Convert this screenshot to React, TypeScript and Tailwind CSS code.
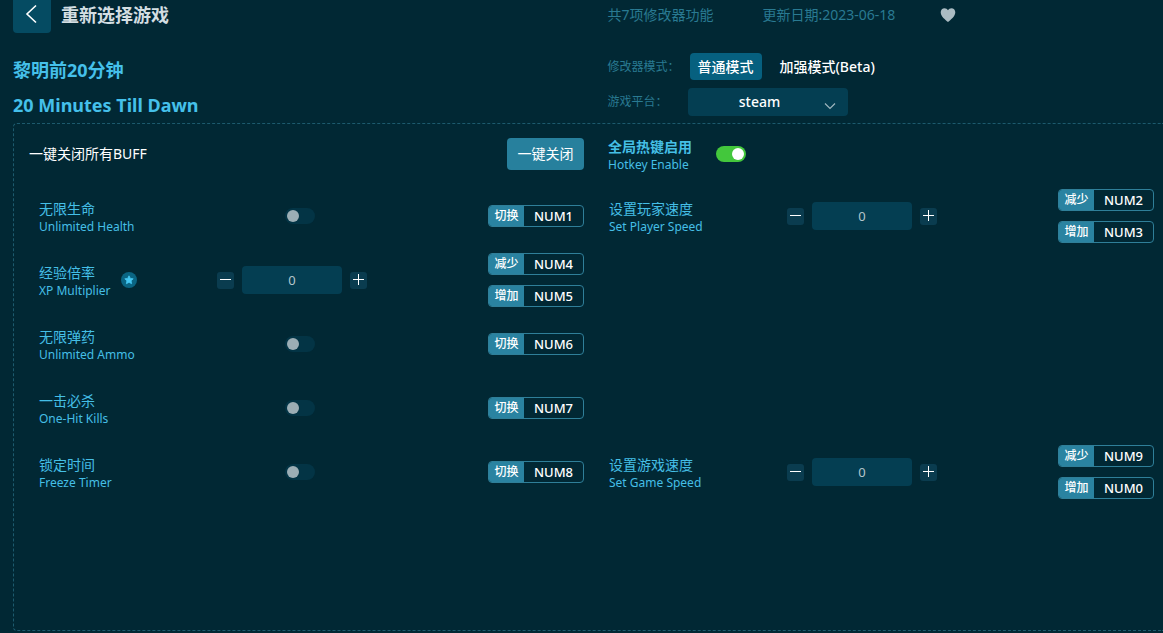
import { useState } from 'react';

type Hotkey = { action: string; keyName: string };

type Cheat = {
  id: string;
  name: string;
  nameEn: string;
  type: 'toggle' | 'number';
  starred?: boolean;
  cell: string;
  hotkeys: Hotkey[];
};

const cheats: Cheat[] = [
  {
    id: 'health',
    name: '无限生命',
    nameEn: 'Unlimited Health',
    type: 'toggle',
    cell: 'col-start-1 row-start-1',
    hotkeys: [{ action: '切换', keyName: 'NUM1' }],
  },
  {
    id: 'player-speed',
    name: '设置玩家速度',
    nameEn: 'Set Player Speed',
    type: 'number',
    cell: 'col-start-2 row-start-1',
    hotkeys: [
      { action: '减少', keyName: 'NUM2' },
      { action: '增加', keyName: 'NUM3' },
    ],
  },
  {
    id: 'xp',
    name: '经验倍率',
    nameEn: 'XP Multiplier',
    type: 'number',
    starred: true,
    cell: 'col-start-1 row-start-2',
    hotkeys: [
      { action: '减少', keyName: 'NUM4' },
      { action: '增加', keyName: 'NUM5' },
    ],
  },
  {
    id: 'ammo',
    name: '无限弹药',
    nameEn: 'Unlimited Ammo',
    type: 'toggle',
    cell: 'col-start-1 row-start-3',
    hotkeys: [{ action: '切换', keyName: 'NUM6' }],
  },
  {
    id: 'one-hit',
    name: '一击必杀',
    nameEn: 'One-Hit Kills',
    type: 'toggle',
    cell: 'col-start-1 row-start-4',
    hotkeys: [{ action: '切换', keyName: 'NUM7' }],
  },
  {
    id: 'freeze',
    name: '锁定时间',
    nameEn: 'Freeze Timer',
    type: 'toggle',
    cell: 'col-start-1 row-start-5',
    hotkeys: [{ action: '切换', keyName: 'NUM8' }],
  },
  {
    id: 'game-speed',
    name: '设置游戏速度',
    nameEn: 'Set Game Speed',
    type: 'number',
    cell: 'col-start-2 row-start-5',
    hotkeys: [
      { action: '减少', keyName: 'NUM9' },
      { action: '增加', keyName: 'NUM0' },
    ],
  },
];

function Toggle({ id, on = false }: { id: string; on?: boolean }) {
  return (
    <input
      id={id}
      type="checkbox"
      role="switch"
      defaultChecked={on}
      className="flex h-4 w-[30px] cursor-pointer appearance-none items-center rounded-full bg-[#033445] px-0.5 before:block before:size-3 before:rounded-full before:bg-[#9caeb5] checked:justify-end checked:bg-[#43c73c] checked:before:bg-white"
    />
  );
}

function Stepper({ id }: { id: string }) {
  const [value, setValue] = useState(0);
  const stepButton = 'flex size-[17px] items-center justify-center rounded-[3px] bg-[#0a3c4f] text-white';

  return (
    <div className="flex items-center gap-2">
      <button type="button" aria-label="减少" onClick={() => setValue(value - 1)} className={stepButton}>
        <svg viewBox="0 0 17 17" className="size-[17px]" stroke="currentColor">
          <path d="M3 7.5h11" />
        </svg>
      </button>
      <input
        id={id}
        type="text"
        value={value}
        onChange={(e) => setValue(Number(e.target.value) || 0)}
        className="h-7 w-[100px] rounded-[4px] bg-[#043e52] text-center text-[13px] text-[#b4c5cc] outline-none"
      />
      <button type="button" aria-label="增加" onClick={() => setValue(value + 1)} className={stepButton}>
        <svg viewBox="0 0 17 17" className="size-[17px]" stroke="currentColor">
          <path d="M3 7.5h11M8.5 2v11" />
        </svg>
      </button>
    </div>
  );
}

function HotkeyButton({ action, keyName }: Hotkey) {
  return (
    <button type="button" className="flex h-[22px] w-24 overflow-hidden rounded-[4px] border border-[#2f7f99] text-white">
      <span className="h-full w-[35px] bg-[#2a83a1] text-center text-xs leading-5 font-medium">{action}</span>
      <span className="h-full flex-1 text-center text-[13px] leading-5 font-medium">{keyName}</span>
    </button>
  );
}

function CheatRow({ cheat }: { cheat: Cheat }) {
  return (
    <div className={`flex h-16 items-center pl-[25px] ${cheat.cell}`}>
      <div className="flex w-[178px] items-center gap-2.5">
        <label htmlFor={cheat.id} className="flex flex-col pt-1 whitespace-nowrap text-[#45bfe6]">
          <span className="text-sm leading-[18px]">{cheat.name}</span>
          <span className="text-xs leading-[18px]">{cheat.nameEn}</span>
        </label>
        {cheat.starred && (
          <svg viewBox="0 0 16 16" className="size-4">
            <circle cx="8" cy="8" r="8" fill="#0a6583" />
            <path
              d="M8 3.800l1.300 2.600 2.900.4-2.100 2 .5 2.900L8 10.300l-2.600 1.400.5-2.900-2.100-2 2.900-.4z"
              fill="#45c8f3"
              stroke="#45c8f3"
              strokeWidth="0.8"
              strokeLinejoin="round"
            />
          </svg>
        )}
      </div>
      {cheat.type === 'toggle' ? (
        <div className="w-[150px] pl-[68px]">
          <Toggle id={cheat.id} />
        </div>
      ) : (
        <Stepper id={cheat.id} />
      )}
      <div className="flex flex-1 flex-col items-end gap-2.5">
        {cheat.hotkeys.map((hotkey) => (
          <HotkeyButton key={hotkey.keyName} {...hotkey} />
        ))}
      </div>
    </div>
  );
}

export default function App() {
  const [enhanced, setEnhanced] = useState(false);
  const modeOn = 'h-[27px] rounded-[4px] bg-[#06607f] px-2 text-sm font-medium text-white';
  const modeOff = 'h-[27px] rounded-[4px] px-2 text-sm font-medium text-white';

  return (
    <div className="flex min-h-screen flex-col bg-[#012834] pb-0.5 pl-[13px] font-['Noto_Sans','Noto_Sans_CJK_SC',sans-serif]">
      {/* Header */}
      <header className="grid grid-cols-2 pr-[9px]">
        <div className="flex h-[33px] items-start gap-2.5">
          <button type="button" aria-label="返回" className="flex h-[33px] w-[38px] justify-center rounded-b-[4px] bg-[#054b62] text-white">
            <svg viewBox="0 0 38 33" className="h-[33px] w-[38px]" fill="none" stroke="currentColor" strokeWidth="1.6">
              <path d="M23 5.5l-9 8.500 9 8.500" />
            </svg>
          </button>
          <h1 className="text-lg leading-[30px] font-bold text-[#d3dee2]">重新选择游戏</h1>
        </div>
        <div className="flex h-[30px] items-center pl-6 text-sm text-[#297a92]">
          <span className="w-[155px]">共7项修改器功能</span>
          <span className="w-[177px]">更新日期:2023-06-18</span>
          <button type="button" aria-label="收藏" className="text-[#abbcc3]">
            <svg viewBox="0 0 16 16" className="size-4" fill="currentColor">
              <path d="M8 15C5.500 13 .7 9.500.7 5.300.7 2.800 2.500 1.200 4.500 1.200 6 1.200 7.300 2 8 3.200 8.700 2 10 1.200 11.500 1.200c2 0 3.800 1.600 3.800 4.100C15.300 9.500 10.500 13 8 15z" />
            </svg>
          </button>
        </div>
      </header>

      {/* Game title and mode settings */}
      <section className="grid h-[90px] grid-cols-2 pt-5 pr-[9px]">
        <div className="flex flex-col text-lg leading-[35px] font-bold text-[#45c0ea]">
          <h2>黎明前20分钟</h2>
          <h2>20 Minutes Till Dawn</h2>
        </div>
        <div className="flex flex-col gap-2 pl-6">
          <div className="flex h-[27px] items-center">
            <span className="w-[82px] text-xs text-[#297a92]">修改器模式：</span>
            <div className="flex gap-2.5">
              <button type="button" aria-pressed={!enhanced} onClick={() => setEnhanced(false)} className={enhanced ? modeOff : modeOn}>
                普通模式
              </button>
              <button type="button" aria-pressed={enhanced} onClick={() => setEnhanced(true)} className={enhanced ? modeOn : modeOff}>
                加强模式(Beta)
              </button>
            </div>
          </div>
          <div className="flex h-7 items-center">
            <label htmlFor="platform" className="w-20 text-xs text-[#297a92]">
              游戏平台：
            </label>
            <div className="relative">
              <select
                id="platform"
                className="h-7 w-40 appearance-none rounded-[4px] bg-[#043e52] pr-4 text-center text-sm font-medium text-white [text-align-last:center]"
              >
                <option>steam</option>
              </select>
              <svg
                viewBox="0 0 12 8"
                className="pointer-events-none absolute right-3 bottom-1.5 h-2 w-3"
                fill="none"
                stroke="#9fb6bf"
                strokeWidth="1.2"
              >
                <path d="M1 1.500l5 5 5-5" />
              </svg>
            </div>
          </div>
        </div>
      </section>

      {/* Cheat list */}
      <main className="flex-1 rounded-l-[4px] border border-r-0 border-dashed border-[#1c5a6d] pr-[9px]">
        <div className="grid h-[60px] grid-cols-2 items-center">
          <div className="flex items-center justify-between pl-[15px] text-sm text-white">
            <span>一键关闭所有BUFF</span>
            <button type="button" className="h-8 w-[77px] rounded-[4px] bg-[#27809d]">
              一键关闭
            </button>
          </div>
          <div className="flex items-center gap-6 pl-6">
            <label htmlFor="hotkey-enable" className="flex flex-col pt-1 text-[#45bfe6]">
              <span className="text-sm leading-[18px] font-bold">全局热键启用</span>
              <span className="text-xs leading-[18px]">Hotkey Enable</span>
            </label>
            <Toggle id="hotkey-enable" on />
          </div>
        </div>
        <div className="grid grid-cols-2">
          {cheats.map((cheat) => (
            <CheatRow key={cheat.id} cheat={cheat} />
          ))}
        </div>
      </main>
    </div>
  );
}
